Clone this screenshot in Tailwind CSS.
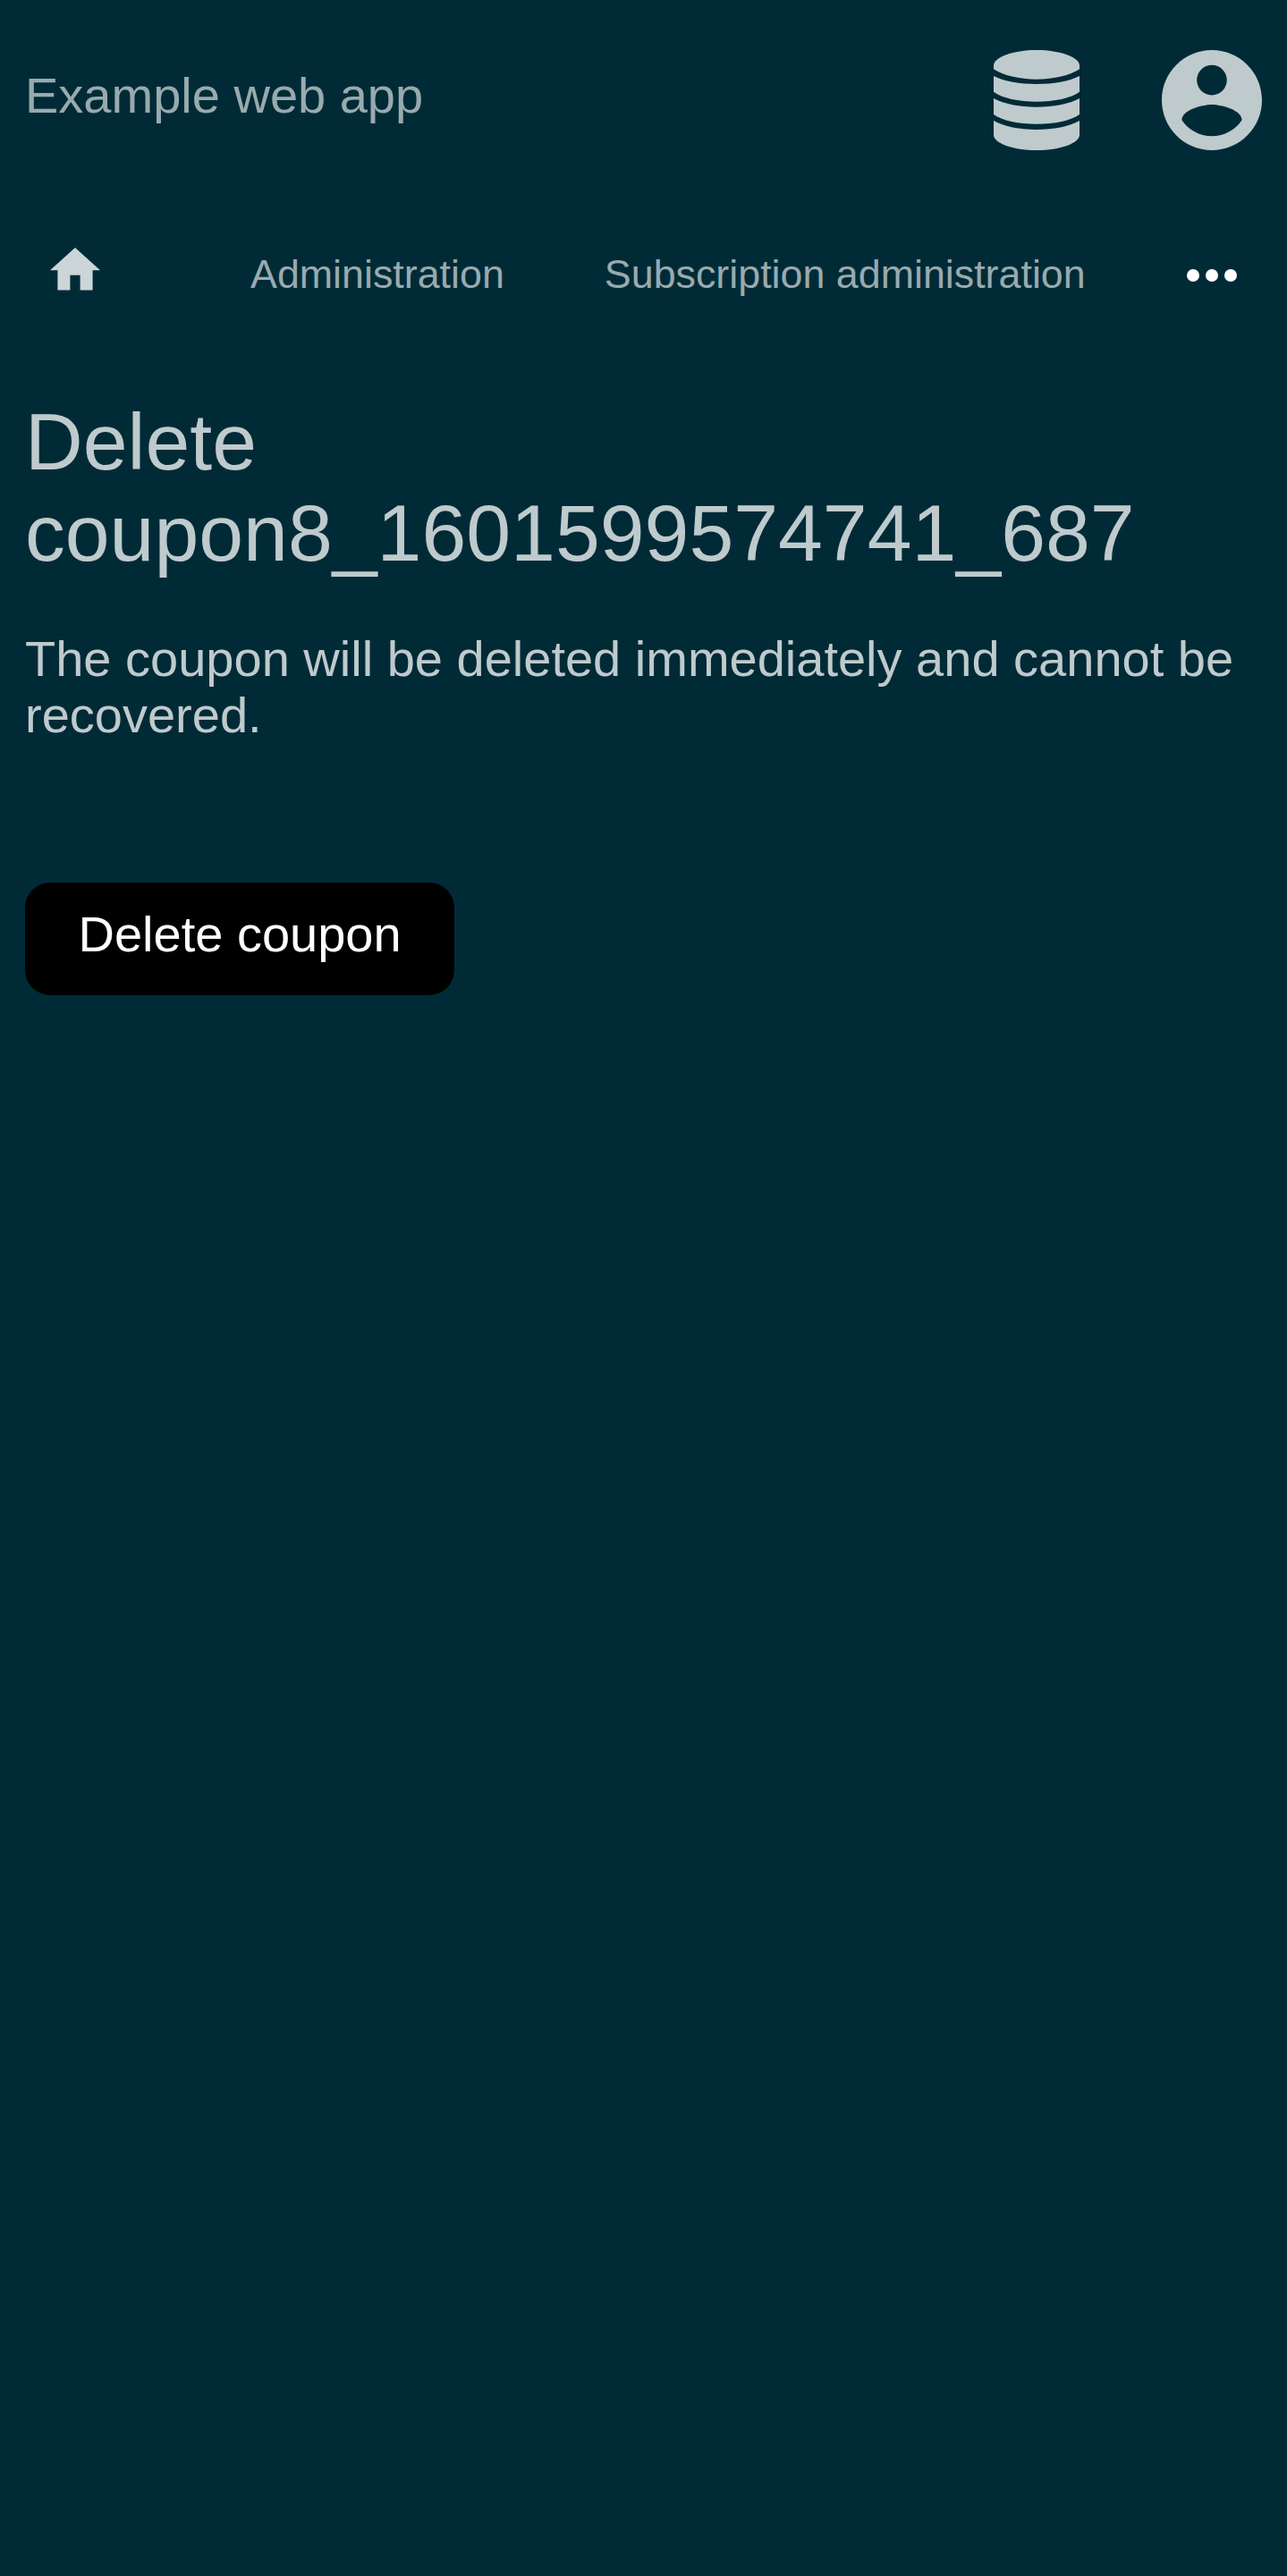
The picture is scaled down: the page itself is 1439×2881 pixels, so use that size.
<!DOCTYPE html>
<html lang="en">
<head>
<meta charset="utf-8">
<title>Delete coupon</title>
<script src="https://cdn.jsdelivr.net/npm/@tailwindcss/browser@4"></script>
</head>
<body class="min-h-screen bg-[#002b36] font-['Liberation_Sans',Arial,sans-serif] text-[56px] leading-[63px] text-[#bfcacd]">
<header class="flex h-56 items-center justify-between px-7">
  <a class="pb-[11px] text-[#99aaaf]">Example web app</a>
  <div class="flex items-center gap-[92.5px]">
    <svg class="h-28 w-24" viewBox="0 0 290 336" preserveAspectRatio="none" fill="currentColor">
      <path d="M0 52C0 24 65 0 145 0S290 24 290 52V64C258 85 205 98 145 98S32 85 0 64Z"/>
      <path d="M0 87C35 105 88 114 145 114S255 105 290 87V140C262 161 205 173 145 173S28 161 0 140Z"/>
      <path d="M0 162C35 181 88 191 145 191S255 181 290 162V216C262 237 205 248 145 248S28 237 0 216Z"/>
      <path d="M0 237C35 257 88 267 145 267S255 257 290 237V284C290 312 225 336 145 336S0 312 0 284Z"/>
    </svg>
    <svg class="size-28" viewBox="2 2 20 20" fill="currentColor"><path d="M12 2C6.48 2 2 6.48 2 12s4.48 10 10 10 10-4.48 10-10S17.52 2 12 2zm0 3c1.66 0 3 1.34 3 3s-1.34 3-3 3-3-1.34-3-3 1.34-3 3-3zm0 14.2c-2.5 0-4.71-1.28-6-3.22.03-1.99 4-3.08 6-3.08 1.99 0 5.97 1.09 6 3.08-1.29 1.94-3.5 3.22-6 3.22z"/></svg>
  </div>
</header>
<nav class="flex h-[168px] items-center px-14 text-[44.8px] text-[#99aaaf]">
  <svg class="mb-3.5 h-[47.6px] w-14 text-[#ccd5d7]" viewBox="2 3 20 17" fill="currentColor"><path d="M10 20v-6h4v6h5v-8h3L12 3 2 12h3v8z"/></svg>
  <a class="ml-[168px] pb-[3px]">Administration</a>
  <a class="ml-28 pb-[3px]">Subscription administration</a>
  <svg class="ml-auto h-3.5 w-14 text-white" viewBox="4 10 16 4" fill="currentColor"><circle cx="6" cy="12" r="2"/><circle cx="12" cy="12" r="2"/><circle cx="18" cy="12" r="2"/></svg>
</nav>
<main class="px-7 pt-[51px]">
  <h1 class="text-[89.6px] leading-[102px]">Delete coupon8_1601599574741_687</h1>
  <p class="mt-[58px]">The coupon will be deleted immediately and cannot be recovered.</p>
  <button class="mt-[156px] block h-[126px] rounded-[28px] bg-black px-[59.5px] pb-[11px] text-white">Delete coupon</button>
</main>
</body>
</html>
